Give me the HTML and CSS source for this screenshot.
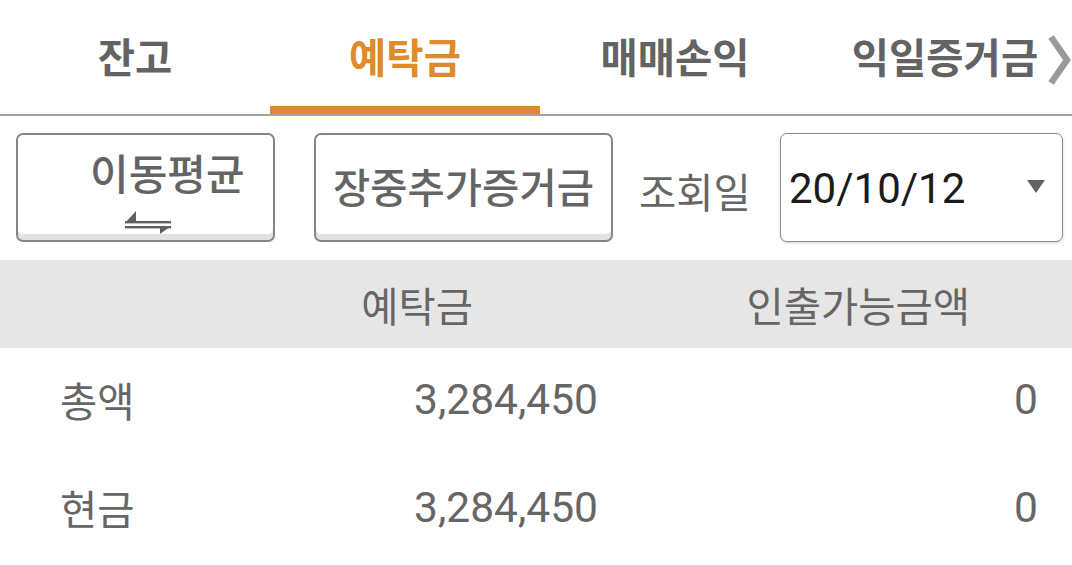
FILE: index.html
```html
<!DOCTYPE html>
<html lang="ko">
<head>
<meta charset="utf-8">
<title>예탁금</title>
<link rel="stylesheet" href="styles.css">
</head>
<body>
<div class="tabs">
  <div class="tab">잔고</div>
  <div class="tab active">예탁금</div>
  <div class="tab">매매손익</div>
  <div class="tab">익일증거금</div>
  <span class="chev"><svg viewBox="0 0 24 52" width="24" height="52"><polyline points="4,3 20,26 4,49" fill="none" stroke="#9a9a9a" stroke-width="6.5"/></svg></span>
</div>
<div class="controls">
  <button class="btn btn-ma">
    <span class="btn-label">이동평균</span>
    <svg class="swap" viewBox="0 0 48 24" width="48" height="24">
      <rect x="1" y="11" width="46" height="2.4" fill="#606060"/>
      <polygon points="1,13 12,13 12,1" fill="#606060"/>
      <rect x="1" y="16" width="46" height="2.4" fill="#606060"/>
      <polygon points="36,16 47,16 36,24" fill="#606060"/>
    </svg>
  </button>
  <button class="btn btn-wide">장중추가증거금</button>
  <span class="date-label">조회일</span>
  <div class="select">
    <span class="date-value">20/10/12</span>
    <span class="caret"></span>
  </div>
</div>
<div class="grid">
  <div class="row head">
    <div class="cell"></div>
    <div class="cell c2">예탁금</div>
    <div class="cell c3">인출가능금액</div>
  </div>
  <div class="row body">
    <div class="cell label">총액</div>
    <div class="cell c2 num">3,284,450</div>
    <div class="cell c3 num">0</div>
  </div>
  <div class="row body">
    <div class="cell label">현금</div>
    <div class="cell c2 num">3,284,450</div>
    <div class="cell c3 num">0</div>
  </div>
</div>
</body>
</html>
```

FILE: styles.css
```css
* { box-sizing: border-box; }
html, body {
  margin: 0;
  padding: 0;
  background: #ffffff;
  width: 1072px;
  height: 565px;
  overflow: hidden;
  font-family: Roboto, "Noto Sans CJK KR", sans-serif;
  color: #666666;
}

.tabs {
  position: relative;
  display: flex;
  height: 116px;
  border-bottom: 2px solid #a3a3a3;
  overflow: hidden;
}
.tab {
  position: relative;
  flex: 0 0 270px;
  height: 114px;
  line-height: 112px;
  text-align: center;
  font-family: "Noto Sans CJK KR", sans-serif;
  font-weight: 700;
  font-size: 40.5px;
  color: #636363;
}
.tab.active { color: #e08a2c; }
.tab.active::after {
  content: "";
  position: absolute;
  left: 0;
  right: 0;
  bottom: -2px;
  height: 10px;
  background: #e08a2c;
}
.chev {
  position: absolute;
  right: 1px;
  top: 34px;
  display: block;
  width: 24px;
  height: 52px;
  background: #ffffff;
}
.chev svg { display: block; }

.controls {
  display: flex;
  align-items: center;
  padding: 17px 9px 0 16px;
  height: 126px;
  margin-bottom: 18px;
}
.btn {
  height: 109px;
  border: 2px solid #858585;
  border-radius: 7px;
  background: #ffffff;
  box-shadow: inset 0 -6px 0 #e2e2e2;
  font-family: "Noto Sans CJK KR", sans-serif;
  font-weight: 500;
  font-size: 40.5px;
  color: #646464;
  padding: 0;
  margin: 0;
}
.btn-ma {
  width: 259px;
  display: flex;
  flex-direction: column;
  align-items: stretch;
}
.btn-label {
  display: block;
  margin-top: 13px;
  padding-left: 72px;
  text-align: left;
  font-size: 42px;
  line-height: 48px;
}
.btn-label, .btn-wide { white-space: nowrap; }
.swap {
  display: block;
  align-self: center;
  margin-top: 14px;
  margin-left: 4px;
}
.btn-wide {
  width: 299px;
  margin-left: 39px;
  line-height: 48px;
  padding-bottom: 4px;
}
.date-label {
  margin-left: 26px;
  font-family: "Noto Sans CJK KR", sans-serif;
  font-size: 40.5px;
  color: #666666;
  line-height: 48px;
  padding-top: 6px;
}
.select {
  margin-left: auto;
  width: 283px;
  height: 109px;
  border: 1px solid #8c8c8c;
  border-radius: 7px;
  box-shadow: 0 1px 3px rgba(0, 0, 0, 0.18);
  display: flex;
  align-items: center;
  padding: 0 17px 0 8px;
  background: #ffffff;
}
.date-value {
  font-family: Roboto, sans-serif;
  font-size: 42px;
  color: #1b1b1b;
  line-height: 50px;
  padding-top: 2px;
}
.caret {
  margin-left: auto;
  width: 0;
  height: 0;
  border-left: 9px solid transparent;
  border-right: 9px solid transparent;
  border-top: 13px solid #636363;
  margin-bottom: 2px;
}

.row {
  display: grid;
  grid-template-columns: 300px 300px 1fr;
  align-items: center;
}
.row.head {
  height: 88px;
  background: #e6e6e6;
  font-family: "Noto Sans CJK KR", sans-serif;
  font-size: 40.5px;
  color: #666666;
}
.row.head .c2 { text-align: right; padding-right: 127px; }
.row.head .c3 { text-align: right; padding-right: 102px; }
.row.body {
  height: 108px;
  font-size: 40.5px;
  color: #666666;
}
.label {
  font-family: "Noto Sans CJK KR", sans-serif;
  padding-left: 60px;
  padding-bottom: 6px;
}
.num {
  font-family: Roboto, sans-serif;
  font-size: 42.5px;
  text-align: right;
  padding-bottom: 6px;
}
.row.body .c2 { padding-right: 2px; }
.row.body .c3 { padding-right: 34px; }
```
